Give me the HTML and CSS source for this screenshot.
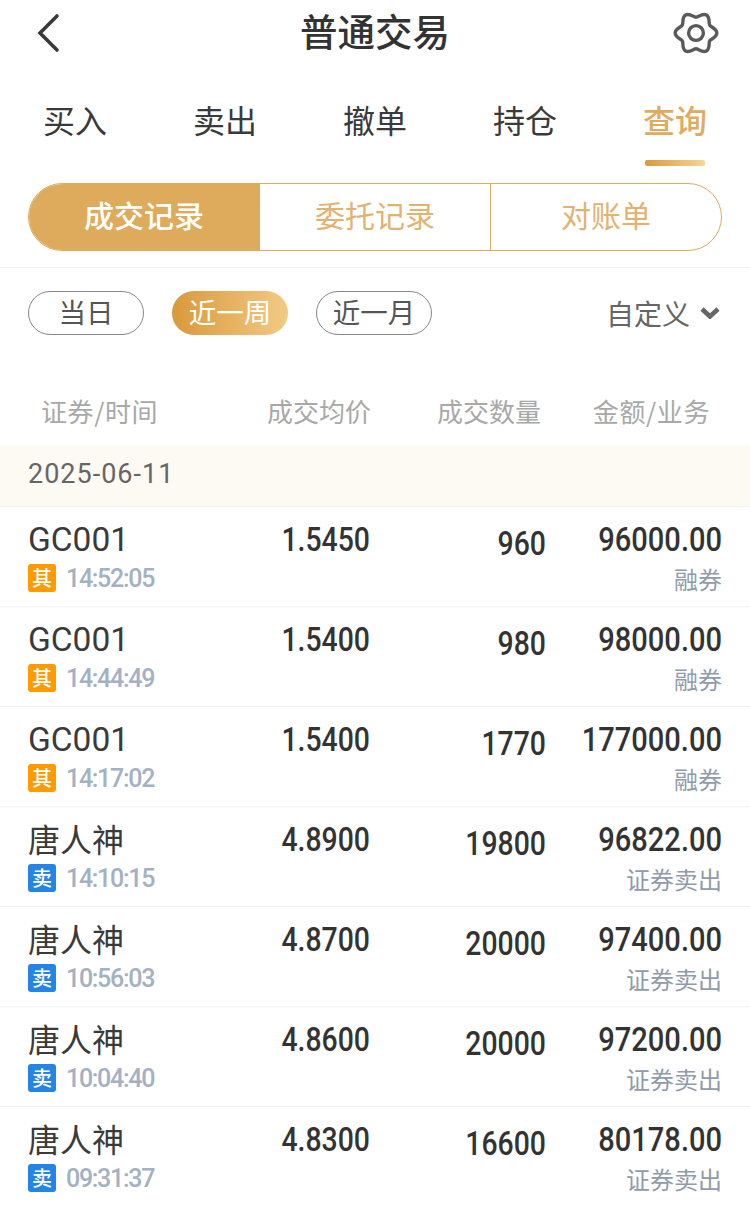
FILE: index.html
```html
<!DOCTYPE html>
<html lang="zh-CN">
<head>
    <meta charset="UTF-8">
    <meta name="viewport" content="width=device-width, initial-scale=1.0">
    <title>普通交易</title>
    <link rel="stylesheet" href="styles.css">
</head>
<body>
    <header class="topbar">
        <svg class="back" width="26" height="40" viewBox="0 0 26 40"><path d="M22 3 L5 20 L22 37" fill="none" stroke="#3a3a3a" stroke-width="3.6" stroke-linecap="round" stroke-linejoin="miter"/></svg>
        <h1>普通交易</h1>
        <svg class="gear" width="44" height="44" viewBox="0 0 44 44"><path d="M42.8 22 C42.8 26.5 36.93 27.73 35.68 29.9 C34.43 32.07 36.3 37.75 32.4 40 C28.5 42.25 24.5 37.8 22 37.8 C19.5 37.8 15.5 42.25 11.6 40 C7.7 37.75 9.57 32.07 8.32 29.9 C7.07 27.73 1.2 26.5 1.2 22 C1.2 17.5 7.07 16.27 8.32 14.1 C9.57 11.93 7.7 6.25 11.6 4 C15.5 1.75 19.5 6.2 22 6.2 C24.5 6.2 28.5 1.75 32.4 4 C36.3 6.25 34.43 11.93 35.68 14.1 C36.93 16.27 42.8 17.5 42.8 22 Z" fill="none" stroke="#5a5a5a" stroke-width="3.4" stroke-linejoin="round"/><circle cx="22" cy="22" r="7.4" fill="none" stroke="#5a5a5a" stroke-width="3.4"/></svg>
    </header>

    <nav class="tabs">
        <a>买入</a>
        <a>卖出</a>
        <a>撤单</a>
        <a>持仓</a>
        <a class="active">查询</a>
    </nav>

    <div class="segment">
        <a class="on">成交记录</a>
        <a>委托记录</a>
        <a>对账单</a>
    </div>

    <div class="filters">
        <a class="chip">当日</a>
        <a class="chip on">近一周</a>
        <a class="chip">近一月</a>
        <span class="custom">自定义
            <svg width="20" height="12" viewBox="0 0 20 12"><path d="M2 2 L10 9.5 L18 2" fill="none" stroke="#666" stroke-width="4.6"/></svg>
        </span>
    </div>

    <div class="thead">
        <span class="wide">证券/时间</span>
        <span>成交均价</span>
        <span>成交数量</span>
        <span class="wide">金额/业务</span>
    </div>

    <div class="date">2025-06-11</div>

    <div class="row">
        <div class="stock"><div class="name">GC001</div><div class="meta"><i class="tag other">其</i><span class="time">14:52:05</span></div></div>
        <div class="num">1.5450</div>
        <div class="num qty">960</div>
        <div class="amount"><div class="num">96000.00</div><div class="biz">融券</div></div>
    </div>
    <div class="row">
        <div class="stock"><div class="name">GC001</div><div class="meta"><i class="tag other">其</i><span class="time">14:44:49</span></div></div>
        <div class="num">1.5400</div>
        <div class="num qty">980</div>
        <div class="amount"><div class="num">98000.00</div><div class="biz">融券</div></div>
    </div>
    <div class="row">
        <div class="stock"><div class="name">GC001</div><div class="meta"><i class="tag other">其</i><span class="time">14:17:02</span></div></div>
        <div class="num">1.5400</div>
        <div class="num qty">1770</div>
        <div class="amount"><div class="num">177000.00</div><div class="biz">融券</div></div>
    </div>
    <div class="row">
        <div class="stock"><div class="name cn">唐人神</div><div class="meta"><i class="tag sell">卖</i><span class="time">14:10:15</span></div></div>
        <div class="num">4.8900</div>
        <div class="num qty">19800</div>
        <div class="amount"><div class="num">96822.00</div><div class="biz">证券卖出</div></div>
    </div>
    <div class="row">
        <div class="stock"><div class="name cn">唐人神</div><div class="meta"><i class="tag sell">卖</i><span class="time">10:56:03</span></div></div>
        <div class="num">4.8700</div>
        <div class="num qty">20000</div>
        <div class="amount"><div class="num">97400.00</div><div class="biz">证券卖出</div></div>
    </div>
    <div class="row">
        <div class="stock"><div class="name cn">唐人神</div><div class="meta"><i class="tag sell">卖</i><span class="time">10:04:40</span></div></div>
        <div class="num">4.8600</div>
        <div class="num qty">20000</div>
        <div class="amount"><div class="num">97200.00</div><div class="biz">证券卖出</div></div>
    </div>
    <div class="row">
        <div class="stock"><div class="name cn">唐人神</div><div class="meta"><i class="tag sell">卖</i><span class="time">09:31:37</span></div></div>
        <div class="num">4.8300</div>
        <div class="num qty">16600</div>
        <div class="amount"><div class="num">80178.00</div><div class="biz">证券卖出</div></div>
    </div>
</body>
</html>
```

FILE: styles.css
```css
html, body {
    margin: 0;
    height: 1205px;
    overflow: hidden;
}
body {
    width: 750px;
    background-color: #ffffff;
    color: #333333;
    font-family: Roboto, "Noto Sans CJK SC", sans-serif;
}
.topbar {
    display: grid;
    grid-template-columns: 1fr auto 1fr;
    align-items: center;
    height: 66px;
    padding: 0 32px 0 35px;
}
.topbar h1 {
    margin: -8px 0 0 -3px;
    font-size: 37.5px;
    font-weight: 500;
    color: #333333;
}
.gear {
    justify-self: end;
    overflow: visible;
}
.tabs {
    display: flex;
    height: 117px;
    box-sizing: border-box;
}
.tabs a {
    position: relative;
    flex: 1;
    padding-top: 33px;
    line-height: 46px;
    text-align: center;
    font-size: 32px;
    color: #3a3a3a;
}
.tabs a.active {
    color: #e0ab5f;
    font-weight: 500;
}
.tabs a.active::after {
    content: "";
    position: absolute;
    left: 45px;
    top: 94px;
    width: 60px;
    height: 6px;
    border-radius: 2px;
    background: linear-gradient(90deg, #d99a3e, #f6d595);
}
.segment {
    display: flex;
    height: 68px;
    margin: 0 28px;
    box-sizing: border-box;
    border: 1px solid #e0aa5c;
    border-radius: 34px;
    overflow: hidden;
}
.segment a {
    flex: 1;
    line-height: 66px;
    text-align: center;
    font-size: 30px;
    color: #e2b271;
    border-left: 1px solid #e0aa5c;
}
.segment a:first-child {
    border-left: none;
}
.segment a.on {
    background-color: #deab5c;
    color: #ffffff;
    font-weight: 500;
}
.filters {
    display: flex;
    align-items: center;
    gap: 28px;
    height: 90px;
    margin-top: 16px;
    padding: 0 28px 1px;
    border-top: 1px solid #f2f2f2;
}
.chip {
    width: 116px;
    height: 44px;
    box-sizing: border-box;
    border: 1px solid #888888;
    border-radius: 22px;
    line-height: 43px;
    text-align: center;
    font-size: 27.5px;
    color: #555555;
}
.chip.on {
    border: none;
    line-height: 45px;
    background: linear-gradient(90deg, #d9993c, #f2ca85);
    color: #ffffff;
}
.custom {
    display: flex;
    align-items: center;
    gap: 10px;
    margin-left: auto;
    margin-right: 2px;
    margin-top: -1px;
    font-size: 28px;
    color: #666666;
}
.thead {
    display: grid;
    grid-template-columns: 222px 120px 176px 176px;
    height: 87px;
    padding: 0 28px;
    line-height: 46px;
    padding-top: 29px;
    box-sizing: border-box;
    font-family: "Noto Sans CJK SC", sans-serif;
    font-size: 26px;
    color: #a8a8a8;
    text-align: right;
}
.thead .wide {
    letter-spacing: .6px;
}
.thead span:nth-child(1) {
    padding-left: 13px;
    text-align: left;
    white-space: nowrap;
}
.thead span:nth-child(2) {
    margin-right: -1px;
    white-space: nowrap;
}
.thead span:nth-child(3) {
    padding-right: 5px;
}
.thead span:nth-child(4) {
    padding-right: 12px;
}
.date {
    height: 60px;
    padding: 0 28px;
    line-height: 56px;
    background-color: #fdfaf3;
    font-size: 27px;
    letter-spacing: 1px;
    color: #666666;
    border-bottom: 1px solid #f2f2f2;
}
.row {
    display: grid;
    grid-template-columns: 222px 120px 176px 176px;
    height: 100px;
    padding: 0 28px;
    box-sizing: border-box;
    border-bottom: 1px solid #f2f2f2;
}
.name {
    margin-top: 11px;
    line-height: 44px;
    font-size: 33.5px;
    color: #3a3a3a;
}
.name.cn {
    font-size: 32px;
    padding-top: 1px;
    margin-bottom: -1px;
}
.meta {
    display: flex;
    align-items: center;
    gap: 10px;
    margin-top: 1px;
}
.tag {
    width: 28px;
    height: 28px;
    border-radius: 3px;
    line-height: 30px;
    text-align: center;
    font-size: 20px;
    font-style: normal;
    font-weight: 500;
    color: #ffffff;
}
.tag.other {
    background-color: #ff9a00;
}
.tag.sell {
    background-color: #2485e6;
}
.time {
    margin-top: 1px;
    font-size: 25px;
    font-weight: 500;
    letter-spacing: -1.3px;
    color: #a3b1c2;
}
.num {
    margin-top: 10px;
    line-height: 44px;
    text-align: right;
    font-size: 34px;
    font-weight: 500;
    color: #333333;
    white-space: nowrap;
    transform: scaleX(.835);
    transform-origin: right center;
}
.num.qty {
    margin-top: 14px;
}
.amount {
    text-align: right;
}
.amount .num {
    transform: scaleX(.855);
}
.biz {
    margin-top: 3px;
    line-height: 34px;
    font-size: 24px;
    color: #8f9bab;
}
```
